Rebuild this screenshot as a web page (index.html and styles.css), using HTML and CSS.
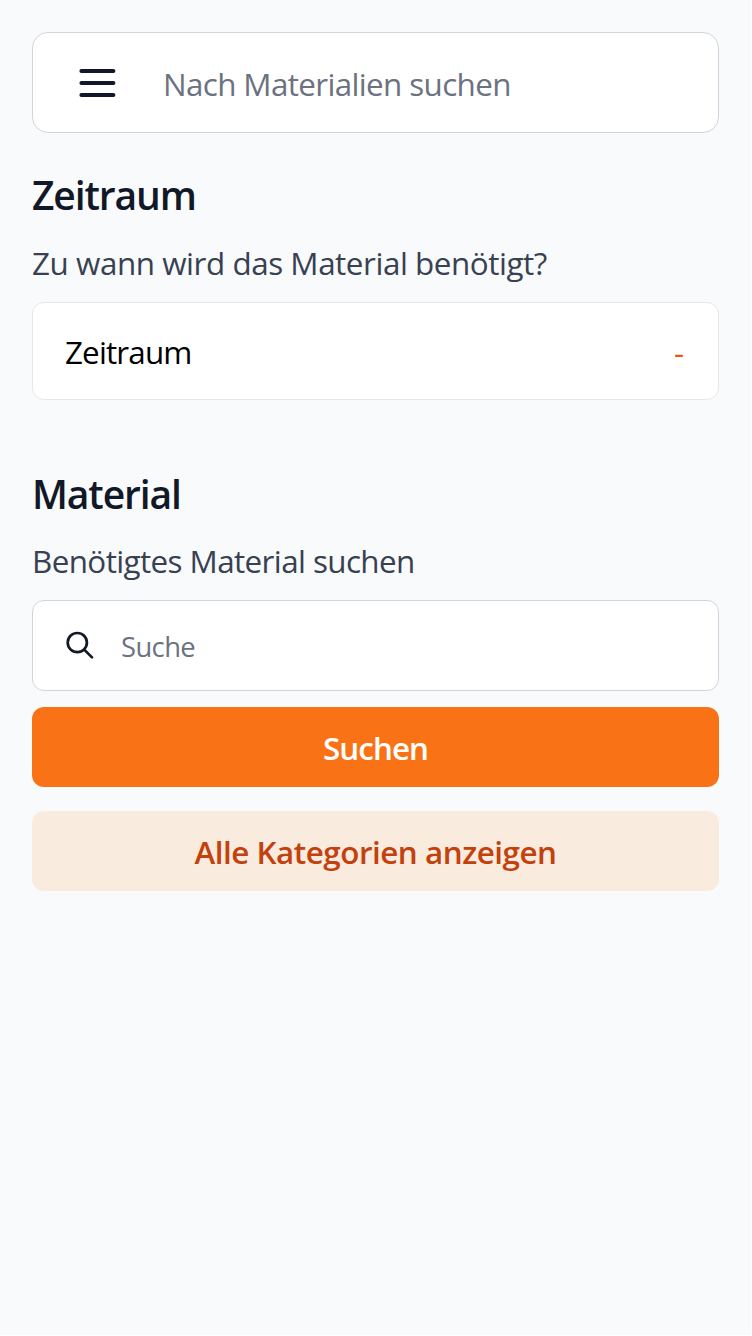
FILE: index.html
```html
<!DOCTYPE html>
<html lang="de">
<head>
<meta charset="utf-8">
<title>Material</title>
<link rel="stylesheet" href="styles.css">
</head>
<body>
<main class="page">
  <header class="topbar">
    <svg class="menu-icon" width="48" height="48" viewBox="0 0 24 24" fill="none" stroke="currentColor" stroke-width="2" stroke-linecap="round"><path d="M4.2 6h16M4.2 12h16M4.2 18h16"/></svg>
    <span class="topbar-text">Nach Materialien suchen</span>
  </header>
  <section class="section">
    <h2 class="title title-period">Zeitraum</h2>
    <p class="hint hint-period">Zu wann wird das Material benötigt?</p>
    <div class="period"><span class="period-label">Zeitraum</span><span class="period-value">-</span></div>
  </section>
  <section class="section section-material">
    <h2 class="title title-material">Material</h2>
    <p class="hint hint-material">Benötigtes Material suchen</p>
    <div class="search">
      <svg class="search-icon" width="32" height="32" viewBox="0 0 32 32" fill="none" stroke="currentColor" stroke-width="2.7" stroke-linecap="round"><circle cx="12.3" cy="12.6" r="9.6"/><path d="M19.2 19.6L27 27.4"/></svg>
      <span class="search-text">Suche</span>
    </div>
    <button class="button primary"><span>Suchen</span></button>
    <button class="button secondary"><span>Alle Kategorien anzeigen</span></button>
  </section>
</main>
</body>
</html>
```
FILE: styles.css
```css
* { box-sizing: border-box; }
html { background: #fff; }
body { margin: 0; font-family: "Open Sans", sans-serif; font-size: 32px; }
.page { width: 751px; height: 1335px; padding: 32px; background: #f9fafc; }
.topbar { display: flex; align-items: center; height: 101px; padding-left: 40px; background: #fff; border: 1px solid #d1d5db; border-radius: 16px; color: #111827; }
.topbar-text { margin-left: 42px; padding-top: 2px; color: #6b7280; font-size: 31.4px; letter-spacing: -0.64px; }
.title { margin: 0; font-size: 39px; line-height: 56px; font-weight: 600; letter-spacing: -1.1px; color: #111827; }
.title-period { margin-top: 34px; }
.hint { margin: 16px 0 0; font-size: 31.4px; line-height: 48px; letter-spacing: -0.45px; color: #374151; }
.hint-material { margin-top: 15px; letter-spacing: -0.6px; }
.period { display: flex; align-items: center; justify-content: space-between; height: 98px; margin-top: 15px; padding: 0 34px 0 32px; background: #fff; border: 1px solid #e5e7eb; border-radius: 12px; font-size: 31.4px; color: #000; }
.period-label { letter-spacing: -0.85px; }
.period-value { color: #ea580c; }
.section-material { margin-top: 66px; }
.search { display: flex; align-items: center; height: 91px; margin-top: 15px; padding-left: 32px; background: #fff; border: 1px solid #d1d5db; border-radius: 12px; color: #111827; }
.search-text { margin-left: 24px; padding-top: 2px; font-size: 27.4px; letter-spacing: -0.6px; color: #6b7280; }
.button { display: flex; align-items: center; justify-content: center; width: 100%; height: 80px; padding: 0; border: 0; border-radius: 12px; font: 600 31.4px "Open Sans", sans-serif; letter-spacing: -0.48px; }
.primary { margin-top: 16px; letter-spacing: -0.95px; background: #f97316; color: #fff; }
.secondary { margin-top: 24px; background: #faebdf; color: #c2410c; }
```
